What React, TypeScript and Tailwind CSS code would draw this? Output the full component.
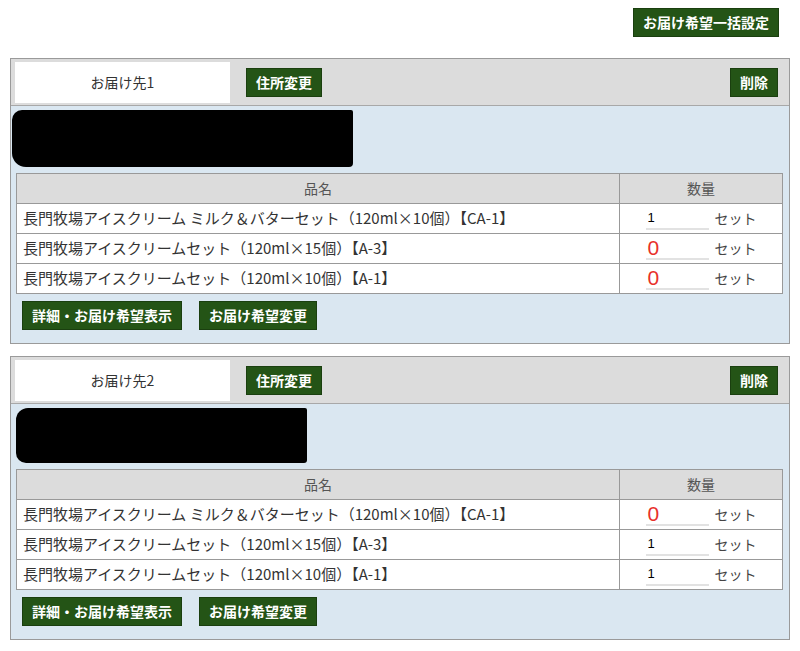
const font = { fontFamily: '"Noto Sans CJK JP", "Noto Sans", sans-serif' }

type Item = { name: string; qty: number }

type Destination = {
  label: string
  blob: string
  items: Item[]
}

const destinations: Destination[] = [
  {
    label: 'お届け先1',
    blob: 'ml-[-4px] h-[57px] w-[341px] rounded-[10px_2px_4px_14px]',
    items: [
      { name: '長門牧場アイスクリーム ミルク＆バターセット（120ml×10個）【CA-1】', qty: 1 },
      { name: '長門牧場アイスクリームセット（120ml×15個）【A-3】', qty: 0 },
      { name: '長門牧場アイスクリームセット（120ml×10個）【A-1】', qty: 0 },
    ],
  },
  {
    label: 'お届け先2',
    blob: 'ml-0 h-[55px] w-[291px] rounded-[12px_2px_3px_10px]',
    items: [
      { name: '長門牧場アイスクリーム ミルク＆バターセット（120ml×10個）【CA-1】', qty: 0 },
      { name: '長門牧場アイスクリームセット（120ml×15個）【A-3】', qty: 1 },
      { name: '長門牧場アイスクリームセット（120ml×10個）【A-1】', qty: 1 },
    ],
  },
]

const GreenButton = ({ children }: { children: React.ReactNode }) => (
  <button className="h-[29px] border border-[#1a3f0f] bg-[#245416] px-[9px] text-[14px] font-bold leading-[27px] text-white whitespace-nowrap">
    {children}
  </button>
)

const QtyCell = ({ qty }: { qty: number }) => (
  <div className="flex items-center justify-center gap-[6px]">
    <div className="flex h-[22px] w-[63px] items-center border-b-2 border-[#e2e2e2] bg-white pl-[2px]">
      {qty === 0 ? (
        <span className="text-[21px] leading-none text-[#e8302a]" style={{ fontFamily: '"Liberation Sans", sans-serif' }}>0</span>
      ) : (
        <span className="text-[13px] leading-none text-black" style={{ fontFamily: '"Liberation Sans", sans-serif' }}>{qty}</span>
      )}
    </div>
    <span className="text-[14px] text-[#444]">セット</span>
  </div>
)

const DestinationCard = ({ d }: { d: Destination }) => (
  <div className="border border-[#9a9a9a]">
    <div className="flex items-center border-b border-[#a8a8a8] bg-[#dcdcdc] pb-[2px] pl-[4px] pr-[11px] pt-[3px]">
      <div className="flex h-[41px] w-[215px] items-center justify-center bg-white text-[14px] text-[#333]">
        {d.label}
      </div>
      <div className="ml-[16px]">
        <GreenButton>住所変更</GreenButton>
      </div>
      <div className="ml-auto">
        <GreenButton>削除</GreenButton>
      </div>
    </div>
    <div className="bg-[#dae7f1] pb-[13px] pl-[5px] pr-[6px] pt-[4px]">
      <div className={`${d.blob} bg-black`} />
      <table className="mt-[6px] w-full border-collapse border border-[#999] text-[15px] text-[#333]">
        <thead>
          <tr className="h-[30px] bg-[#dcdcdc] text-[14px] font-normal text-[#555]">
            <th className="border border-[#999] font-normal">品名</th>
            <th className="w-[163px] border border-[#999] font-normal">数量</th>
          </tr>
        </thead>
        <tbody>
          {d.items.map((item, i) => (
            <tr key={i} className="h-[30px] bg-white">
              <td className="border border-[#999] pl-[6px]">{item.name}</td>
              <td className="border border-[#999]">
                <QtyCell qty={item.qty} />
              </td>
            </tr>
          ))}
        </tbody>
      </table>
      <div className="mt-[7px] flex gap-[17px] pl-[6px]">
        <GreenButton>詳細・お届け希望表示</GreenButton>
        <GreenButton>お届け希望変更</GreenButton>
      </div>
    </div>
  </div>
)

export default function App() {
  return (
    <div className="min-h-[651px] w-full bg-white px-[10px] pt-[8px]" style={font}>
      <div className="flex justify-end pr-[11px]">
        <GreenButton>お届け希望一括設定</GreenButton>
      </div>
      <div className="mt-[21px] flex flex-col gap-[12px]">
        {destinations.map((d) => (
          <DestinationCard key={d.label} d={d} />
        ))}
      </div>
    </div>
  )
}
